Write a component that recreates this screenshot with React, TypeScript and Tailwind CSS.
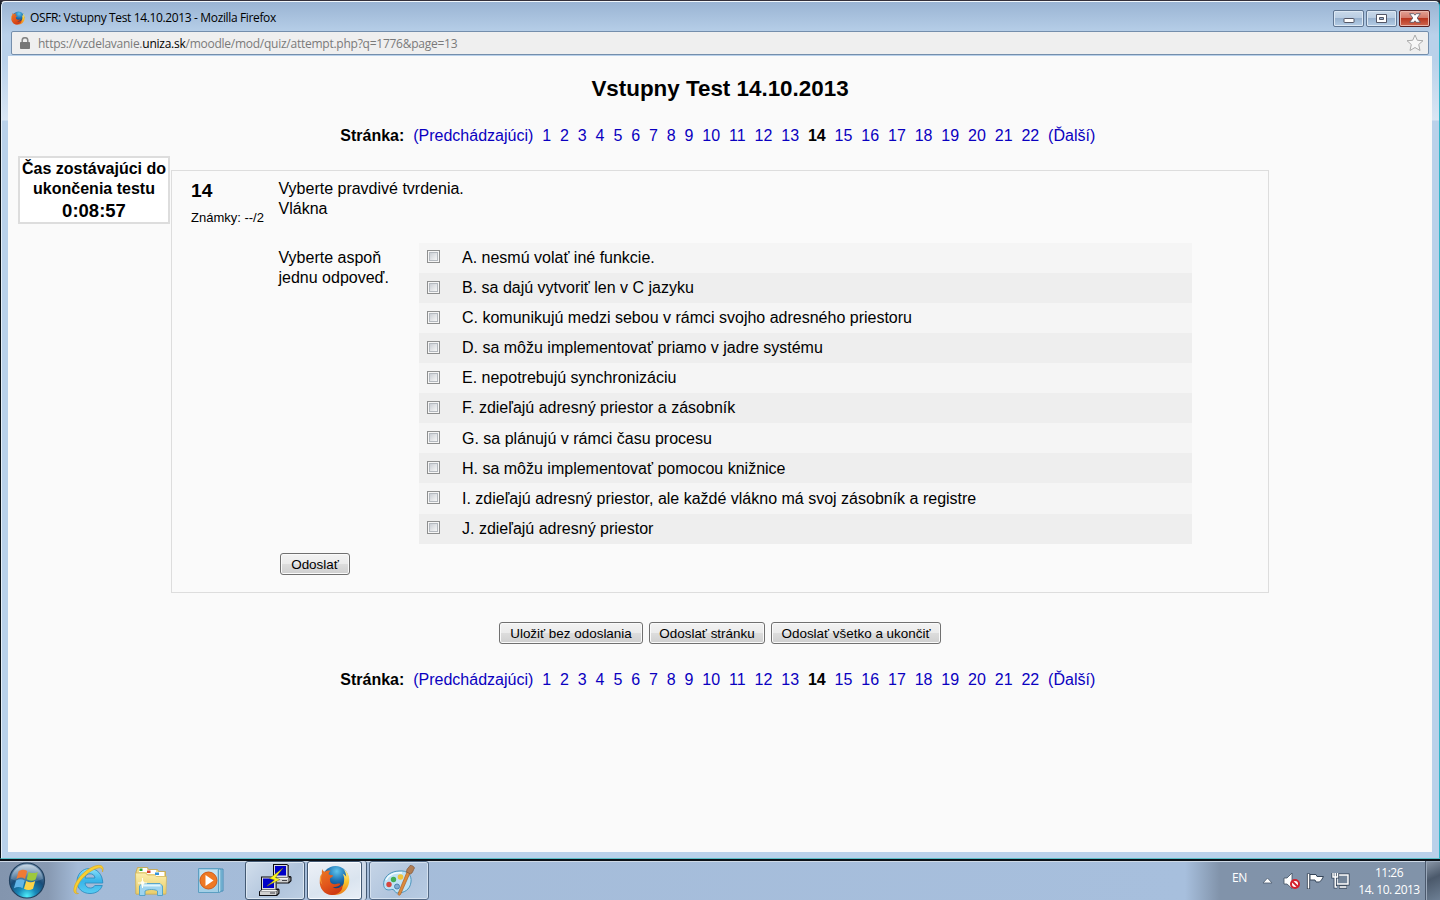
import React from "react";

const answers = [
  { text: "A. nesmú volať iné funkcie.", row: "h-[30px]", box: "pt-[7px]", label: "pt-[5px]" },
  { text: "B. sa dajú vytvoriť len v C jazyku", row: "h-[30px]", box: "pt-[8px]", label: "pt-[5px]" },
  { text: "C. komunikujú medzi sebou v rámci svojho adresného priestoru", row: "h-[30px]", box: "pt-[8px]", label: "pt-[5px]" },
  { text: "D. sa môžu implementovať priamo v jadre systému", row: "h-[30px]", box: "pt-[8px]", label: "pt-[5px]" },
  { text: "E. nepotrebujú synchronizáciu", row: "h-[30px]", box: "pt-[8px]", label: "pt-[5px]" },
  { text: "F. zdieľajú adresný priestor a zásobník", row: "h-[30px]", box: "pt-[8px]", label: "pt-[5px]" },
  { text: "G. sa plánujú v rámci času procesu", row: "h-[30px]", box: "pt-[8px]", label: "pt-[6px]" },
  { text: "H. sa môžu implementovať pomocou knižnice", row: "h-[30px]", box: "pt-[8px]", label: "pt-[6px]" },
  { text: "I. zdieľajú adresný priestor, ale každé vlákno má svoj zásobník a registre", row: "h-[31px]", box: "pt-[8px]", label: "pt-[6px]" },
  { text: "J. zdieľajú adresný priestor", row: "h-[30px]", box: "pt-[7px]", label: "pt-[5px]" },
];

const pages = Array.from({ length: 22 }, (_, i) => i + 1);

function FirefoxIcon({ size, id }: { size: number; id: string }) {
  return (
    <svg width={size} height={size} viewBox="0 0 32 32" className="shrink-0">
      <defs>
        <radialGradient id={id + "g"} cx="0.55" cy="0.2" r="0.8">
          <stop offset="0" stopColor="#5fc4ec" />
          <stop offset="0.45" stopColor="#1c72b4" />
          <stop offset="1" stopColor="#0c2458" />
        </radialGradient>
        <linearGradient id={id + "f"} x1="0" y1="0" x2="0.5" y2="1">
          <stop offset="0" stopColor="#ea7a25" />
          <stop offset="0.6" stopColor="#e2571b" />
          <stop offset="1" stopColor="#cf3a14" />
        </linearGradient>
        <linearGradient id={id + "y"} x1="0" y1="0" x2="0" y2="1">
          <stop offset="0" stopColor="#fff2a0" />
          <stop offset="0.5" stopColor="#fbc52c" />
          <stop offset="1" stopColor="#ec7a1c" />
        </linearGradient>
      </defs>
      <circle cx="17" cy="14.5" r="13.5" fill={"url(#" + id + "g)"} />
      <path d="M25 4c5 3 7 8 6 14-1.200 8-8 13-15 13-4 0-8-2-10-5 10 4 17 0 19.500-7 1-5 .5-7-1-10 2 1 3 2 3.500 3C28 9 27 6 25 4z" fill={"url(#" + id + "y)"} />
      <path d="M3.500 4C4 6 5 6.500 6 7c2-1.500 4-1.500 6-1-1 .8-2 2-2 3.500 1 1 3 1 4.500 1.200 0 1.500-1.500 2-3 3-.8 1 .3 2 0 3 1 3.500 5 3.500 8 2.500 1.500-.5 2.500 0 2.500 1-2 2-5 3-8 2.800 4 2.500 9 0 10-3 1.500 6-4 10-10 11C6 31.500 0 24 .8 16 1 12.500 2 10.500 3 9c-.2-2 0-3.500.5-5z" fill={"url(#" + id + "f)"} />
      <path d="M3 9c-1 3-1.500 8 1 12-3-3-4-7-2.500-10z" fill="#f7a13b" />
    </svg>
  );
}

function Pagination() {
  return (
    <div className="whitespace-pre text-center text-[16px] leading-5 text-[#0a00c0]">
      <b className="text-black">Stránka:</b>
      <span>{"  (Predchádzajúci)  "}</span>
      {pages.map((p) => (
        <span key={p} className={p === 14 ? "font-bold text-black" : ""}>
          {p + "  "}
        </span>
      ))}
      <span>(Ďalší)</span>
      <span>{" "}</span>
    </div>
  );
}

function FormButton({ label, className }: { label: string; className: string }) {
  return (
    <button
      className={
        "flex h-[22px] items-center justify-center whitespace-nowrap rounded-[3px] border border-[#707070] bg-[linear-gradient(#f3f3f3_0%,#ebebeb_48%,#dddddd_50%,#cfcfcf_100%)] pt-px text-[13.450px] leading-none text-black shadow-[inset_0_0_0_1px_#fafafa] " +
        className
      }
    >
      {label}
    </button>
  );
}

function Checkbox() {
  return (
    <span className="block h-[13px] w-[13px] border border-[#8e8f8f] bg-[#f6f6f6] p-px">
      <span className="block h-[9px] w-[9px] border border-[#b4b9bf] bg-[linear-gradient(135deg,#cbcfd5,#f6f6f6)]" />
    </span>
  );
}

function CaptionButtons() {
  return (
    <div className="flex gap-[2px]">
      <div className="flex h-[17px] w-[31px] items-center justify-center rounded-[2px] border border-[#5f7591] bg-[linear-gradient(#c9d9ea_0%,#b8cce2_48%,#98b2cf_50%,#b4cde6_100%)] shadow-[inset_0_0_0_1px_#dce8f4]">
        <svg width="12" height="12"><rect x="1" y="6.500" width="10" height="4" rx=".5" fill="#fff" stroke="#535666" /></svg>
      </div>
      <div className="flex h-[17px] w-[31px] items-center justify-center rounded-[2px] border border-[#5f7591] bg-[linear-gradient(#c9d9ea_0%,#b8cce2_48%,#98b2cf_50%,#b4cde6_100%)] shadow-[inset_0_0_0_1px_#dce8f4]">
        <svg width="11" height="9"><path d="M.5.5h10v8H.5z M3.500 3.500v2h4v-2z" fill="#fff" fillRule="evenodd" stroke="#535666" /></svg>
      </div>
      <div className="flex h-[17px] w-[31px] items-center justify-center rounded-[2px] border border-[#5a1f21] bg-[linear-gradient(#e3a296_0%,#d3796a_46%,#b93620_50%,#cf6850_100%)] shadow-[inset_0_0_0_1px_#e9b5ab]">
        <svg width="12" height="10"><path d="M.7.700h4L6 2.200 7.300.700h4L8.200 5l3.100 4.300h-4L6 7.800 4.700 9.300h-4L3.800 5z" fill="#fff" stroke="#535666" strokeWidth=".8" /></svg>
      </div>
    </div>
  );
}

function StartOrb() {
  return (
    <svg width="38" height="38" viewBox="0 0 38 38">
      <defs>
        <radialGradient id="orb" cx=".5" cy=".95" r=".9">
          <stop offset="0" stopColor="#4ff0fb" />
          <stop offset=".3" stopColor="#1787b8" />
          <stop offset=".62" stopColor="#194c78" />
          <stop offset="1" stopColor="#6f8fae" />
        </radialGradient>
        <linearGradient id="gloss" x1="0" y1="0" x2="0" y2="1">
          <stop offset="0" stopColor="#dce8f2" stopOpacity=".8" />
          <stop offset="1" stopColor="#a9c1d6" stopOpacity=".2" />
        </linearGradient>
      </defs>
      <circle cx="19" cy="18.500" r="17.500" fill="url(#orb)" stroke="#21405f" strokeWidth="1.200" />
      <path d="M3 17C4 8 11 2.500 19 2.500S34 8 35 17c-8 4-24 4-32 0z" fill="url(#gloss)" />
      <g transform="translate(-1.300 -2) scale(1.080)">
        <path d="M11 10.500c3-2 5.500-1.800 8-.2l-2 7.200c-2.500-1.600-5-1.600-8 0z" fill="#ef7b35" />
        <path d="M20.300 11c3 1.500 5.500 1.500 8.500 0l-2 7c-3 1.600-5.500 1.500-8.300-.1z" fill="#9dc83e" />
        <path d="M8.700 19c3-1.700 5.500-1.500 8-.1l-2 7.200c-2.500-1.500-5-1.500-8 0z" fill="#62b5e8" />
        <path d="M18 19.500c3 1.500 5.500 1.500 8.400 0l-2 7.200c-3 1.700-5.500 1.400-8.400-.1z" fill="#fcd348" />
      </g>
    </svg>
  );
}

function ExplorerE() {
  return (
    <svg width="32" height="32" viewBox="0 0 32 32">
      <defs>
        <linearGradient id="ie" x1="0" y1="0" x2="0" y2="1">
          <stop offset="0" stopColor="#8be0fa" />
          <stop offset=".5" stopColor="#38b3e8" />
          <stop offset="1" stopColor="#58cdf3" />
        </linearGradient>
      </defs>
      <path fillRule="evenodd" d="M16.500 4.500C24 4.500 29.500 10 29.800 19H12c.3 3.500 2.500 5 5.500 5 2 0 3.500-1 4.300-2.500h7.500C27.500 26.500 23 29.500 17 29.500 9.500 29.500 4 24.500 4 17.500S9 4.500 16.500 4.500zM12 14h10c-.5-3-2.300-4.200-5-4.200S12.500 11 12 14z" fill="url(#ie)" stroke="#2688bd" strokeWidth=".8" />
      <path d="M29.500 8C31 4.500 30 1 25.500 1.300 16 2 3 14 1 24c-.8 4 1 6.500 4.500 5.500-2.500 0-3-2-2-5C6.500 15 17 6 25 4c3-.8 4.500.5 4.500 4z" fill="#f9cf32" stroke="#d7a51e" strokeWidth=".6" />
    </svg>
  );
}

function FolderIcon() {
  return (
    <svg width="34" height="32" viewBox="0 0 34 32">
      <defs>
        <linearGradient id="fold" x1="0" y1="0" x2="0" y2="1">
          <stop offset="0" stopColor="#fbeeac" />
          <stop offset="1" stopColor="#e9cd6a" />
        </linearGradient>
      </defs>
      <path d="M2 6l1.500-4.500h10l1 2h9l1 2h7V28H2z" fill="#f2dd8b" stroke="#c3a34d" strokeWidth=".8" />
      <path d="M5 2h8v4H5zM13 4h9v4h-9zM21 6h9v4h-9z" fill="#fff" />
      <path d="M5.500 2.500h3v2.500h-3z" fill="#2aa22e" />
      <path d="M13 4.500h3.500v2.500H13z" fill="#d8432a" />
      <path d="M21 6.500h4v2.500h-4z" fill="#3393db" />
      <path d="M1.500 7h10l2 2h7l2 1.500h10L32 28H2z" fill="url(#fold)" stroke="#d1b45b" strokeWidth=".7" />
      <path d="M5.500 29.500V20L8 17.500h18l2.500 2.500v9.500h-5V25c-2-2-10-2-12.500 0v4.500z" fill="#9ed4ef" stroke="#4ea0c8" strokeWidth=".9" />
      <path d="M7.500 19.500h19" stroke="#dff5fc" strokeWidth="2" />
      <path d="M8.500 12v10M4 17h9" stroke="#fffef1" strokeWidth="1" />
      <circle cx="8.500" cy="17" r="2" fill="#fffef1" />
    </svg>
  );
}

function MediaIcon() {
  return (
    <svg width="30" height="28" viewBox="0 0 30 28">
      <path d="M11 2h15v22l-14 1z" fill="#8fc4e1" stroke="#478eb7" />
      <path d="M8 2h15l1 .5v22l-2 1H8z" fill="#b5dced" stroke="#5199be" />
      <path d="M1.500 1.500h20v24h-20z" fill="#a3cfe6" stroke="#5c9fc2" />
      <path d="M3 3h17v8L3 18z" fill="#c6e3f1" />
      <circle cx="11.500" cy="13.500" r="8.500" fill="#ee7924" stroke="#d25b18" />
      <path d="M8.500 8v11l8-5.500z" fill="#fff" />
    </svg>
  );
}

function PuttyTerminal() {
  return (
    <>
      <path d="M1 9L3 0h15v12l2 1v4l-3 3H0v-5l2-2z" fill="none" />
      <path d="M2 0h14l2 1.500V12h1.500l1 1v4L18 19.500H0V15l2-1.500z" fill="#0c0c10" />
      <path d="M3 1h13v12H3z" fill="#dcdcdc" />
      <path d="M16 1l1.500 1v10.500l-1.500 1z" fill="#8c8c8c" />
      <path d="M4 2h11v9.500H4z" fill="#0000c8" />
      <path d="M1 15l2-1.500h15.500L17 15z" fill="#f4f4f4" />
      <path d="M1 15h16v3.500H1z" fill="#cfcfcf" />
      <path d="M17 15l2.500-1.800v3.300L17 18.500z" fill="#858585" />
      <path d="M11 16.500h5" stroke="#43434a" />
    </>
  );
}

function PuttyIcon() {
  return (
    <svg width="33" height="33" viewBox="0 0 33 33">
      <g transform="translate(12 0)"><PuttyTerminal /></g>
      <g transform="translate(0 12.500)"><PuttyTerminal /></g>
      <path d="M24 4L10.500 14.500l5 1.500L8 22l13-6.500-4.500-2z" fill="#fbf51f" stroke="#777510" strokeWidth=".5" />
    </svg>
  );
}

function PaintIcon() {
  return (
    <svg width="34" height="34" viewBox="0 0 34 34">
      <path d="M17 8c8-1 13 4 12 11-1 8-7 11-14 11-2 0-2-3-4-3.500-2-.5-3 1-6 .2C2 26 1 22 2 18 4 12 9 8.500 17 8z" fill="#bfe2f5" stroke="#4e95bb" />
      <path d="M4 17c3-6 10-8 16-7" stroke="#f3fcff" strokeWidth="1.500" fill="none" />
      <circle cx="7" cy="21.500" r="2.700" fill="#d6463e" />
      <circle cx="11.500" cy="16.500" r="2.700" fill="#43ae55" />
      <circle cx="18.500" cy="14" r="2.800" fill="#f0c53b" />
      <circle cx="15" cy="23.500" r="2.500" fill="#7fabd0" stroke="#4c82b1" />
      <path d="M25 9l3 1-9.500 21.500c-1.500 1.500-3 .5-2.200-1.500z" fill="#dd8b3b" stroke="#a9602a" strokeWidth=".7" />
      <path d="M24.500 9c0-4 2.500-4 3.500-6.500 2-.5 4 1 4.500 2.500C31 7 31 10 28.500 11z" fill="#b17d54" stroke="#80583b" strokeWidth=".7" />
    </svg>
  );
}

function TrayIcons() {
  return (
    <svg width="90" height="20" viewBox="0 0 90 20">
      <path d="M1 12l4.500-5 4.500 5z" fill="#fff" stroke="#4b5c70" strokeWidth=".8" />
      <path d="M22 7h3l5-5v15.500L25 13h-3z" fill="#fff" stroke="#3f4e60" strokeWidth=".8" />
      <circle cx="33" cy="13" r="4" fill="#fff" stroke="#d3202c" strokeWidth="2" />
      <path d="M30 10l6 6" stroke="#d3202c" strokeWidth="2" />
      <path d="M46.500 2.500v15.500" stroke="#303d4e" strokeWidth="3.200" />
      <path d="M48 3.500h6l1 2h6.500l-2 3.500-2 2h-3.500l-1-2h-5z" fill="#fff" stroke="#36465a" />
      <path d="M46.500 3v14.500" stroke="#fff" strokeWidth="1.500" />
      <path d="M75 4h11v9H75z" fill="#64758a" stroke="#303f50" strokeWidth="3" />
      <path d="M75 4h11v9H75z" fill="#75869a" stroke="#fff" strokeWidth="1.500" />
      <path d="M77 16h8" stroke="#303f50" strokeWidth="3.200" />
      <path d="M77.500 16h7" stroke="#fff" strokeWidth="1.600" />
      <path d="M71 2v4h4.500V2M73.200 6v10h2" fill="none" stroke="#34445a" strokeWidth="3.200" />
      <path d="M71 2v4h4.500V2M73.200 2v14h2" fill="none" stroke="#fff" strokeWidth="1.500" />
    </svg>
  );
}

function Taskbar() {
  return (
    <footer className="flex h-[41px] shrink-0 border-t-2 border-t-[#0b1118] bg-[linear-gradient(90deg,#8395ae_0,#8799b2_48px,#a4bbd8_78px,#a7bfdd_1185px,#8193aa_1220px,#8193a9_100%)] shadow-[inset_0_1px_0_#ced9e6]">
      <div className="flex w-[245px] shrink-0">
        <div className="ml-2 w-[38px] pt-[1px]"><StartOrb /></div>
        <div className="ml-[27px] w-8 pt-[3px]"><ExplorerE /></div>
        <div className="ml-[29px] w-[34px] pt-[5px]"><FolderIcon /></div>
        <div className="ml-[29px] w-[30px] pt-[6px]"><MediaIcon /></div>
      </div>
      <div className="mr-[2px] h-[39px] w-[60px] shrink-0 rounded-[3px] border border-[#435973] bg-[linear-gradient(135deg,#d2deec,#b0c4dc_60%,#bccee3)] pl-[13px] pt-[2px] shadow-[inset_0_0_0_1px_#dce7f2]"><PuttyIcon /></div>
      <div className="h-[39px] w-[55px] shrink-0 rounded-[3px] border border-[#435973] bg-[linear-gradient(160deg,#edf1f7,#dae4ef_60%,#e8eef6)] pl-[11px] pt-[3px] shadow-[inset_0_0_0_1px_#f8fbff]"><FirefoxIcon size={31} id="task" /></div>
      <div className="mr-[2px] h-[39px] w-[5px] shrink-0 rounded-r-[3px] border-r border-[#435973] bg-[#ccd8e7]" />
      <div className="h-[39px] w-[60px] shrink-0 rounded-[3px] border border-[#536985] bg-[linear-gradient(135deg,#c5d4e6,#b0c4dd_60%,#b8cce3)] pl-[12px] pt-[1px] shadow-[inset_0_0_0_1px_#d5e1ef]"><PaintIcon /></div>
      <div className="ml-auto flex shrink-0 font-['Open_Sans','Noto_Sans',sans-serif] text-[12px] text-white">
        <span className="mr-[14px] w-4 pt-[9px] text-[12px] leading-4 tracking-[-0.4px]">EN</span>
        <div className="w-[90px] pt-[10px]"><TrayIcons /></div>
        <div className="ml-[3px] w-[68px] whitespace-nowrap pt-[3px] text-center leading-[17px] tracking-[-0.500px]">
          <div>11:26</div>
          <div>14. 10. 2013</div>
        </div>
        <div className="ml-[2px] w-[15px] border-l border-[#4b596d] bg-[linear-gradient(155deg,#8c99aa,#4b596b_45%,#6d7f94)] shadow-[inset_1px_1px_0_#9aa8ba]" />
      </div>
    </footer>
  );
}

export default function App() {
  return (
    <div className="flex h-[900px] w-[1440px] flex-col overflow-hidden bg-[#20222b] font-['Liberation_Sans',Arial,sans-serif] text-[16px] text-black">
      <div className="h-px shrink-0 bg-[#34303a]" />
      <section className="flex h-[858px] shrink-0 flex-col rounded-t-[5px] border-x border-t border-b border-l-[#0b1118] border-r-[#32b6ca] border-t-[#f2f7fb] border-b-[#58bec6] bg-[linear-gradient(#9ab4d3_0,#b9d1ea_33px,#b9d1ea_58px,#d9e6f4_118px,#b9d1ea_119px)] px-[7px] shadow-[inset_1px_0_0_#e5eff8]">
        <header className="flex h-[29px] shrink-0 items-center pl-[3px] pr-[2px] pt-[3px]">
          <FirefoxIcon size={14} id="title" />
          <span className="ml-[5px] whitespace-nowrap font-['Open_Sans','Noto_Sans',sans-serif] text-[12px] leading-4 tracking-[-0.360px]">OSFR: Vstupny Test 14.10.2013 - Mozilla Firefox</span>
          <div className="ml-auto"><CaptionButtons /></div>
        </header>
        <div className="mx-[3px] flex h-6 shrink-0 items-center rounded-[2px] border border-[#748eac] bg-[#efefef] pl-[8px] pr-[4px]">
          <svg width="10" height="12" viewBox="0 0 10 12"><path d="M2.200 6V3.500a2.800 2.800 0 0 1 5.600 0V6" fill="none" stroke="#858585" strokeWidth="1.500" /><rect y="5" width="10" height="7" rx=".8" fill="#777" /></svg>
          <span className="ml-[8px] whitespace-nowrap pt-px font-['Open_Sans','Noto_Sans',sans-serif] text-[12px] leading-4 tracking-[-0.250px] text-[#7a7a7a]">https://vzdelavanie.<span className="text-black">uniza.sk</span>/moodle/mod/quiz/attempt.php?q=1776&amp;page=13</span>
          <svg className="ml-auto" width="18" height="18" viewBox="0 0 18 18"><path d="M9 1l2.300 5.300 5.700.4-4.300 3.800L14 16.500l-5-3-5 3 1.300-6L1 6.700l5.700-.4z" fill="#f7f7f7" stroke="#aaa" /></svg>
        </div>
        <main className="mt-px flex h-[796px] shrink-0 flex-col bg-[#fafafa]">
          <h1 className="mt-[19px] text-center text-[22.400px] font-bold leading-7">Vstupny Test 14.10.2013</h1>
          <div className="mt-[23px]"><Pagination /></div>
          <div className="mt-[10px] flex items-start">
            <aside className="ml-[10px] h-[68px] w-[152px] shrink-0 border-2 border-[#dddddd] bg-white pt-px text-center font-bold leading-5">
              <div className="whitespace-nowrap">Čas zostávajúci do</div>
              <div>ukončenia testu</div>
              <div className="text-[18.500px] leading-[23px]">0:08:57</div>
            </aside>
            <section className="ml-px mt-[14px] flex h-[423px] w-[1098px] shrink-0 border border-[#dddddd]">
              <div className="w-[106px] shrink-0 pl-[19px] pt-2">
                <div className="text-[19.200px] font-bold leading-6">14</div>
                <div className="mt-[7px] whitespace-nowrap text-[13px] leading-4">Známky: --/2</div>
              </div>
              <div className="flex flex-col">
                <div className="h-[72px] pl-[0.500px] pt-[8px] leading-5">Vyberte pravdivé tvrdenia.<br />Vlákna</div>
                <div className="flex">
                  <div className="w-[141px] shrink-0 pl-[0.500px] pt-[5px] leading-5">Vyberte aspoň<br />jednu odpoveď.</div>
                  <div className="flex w-[773px] flex-col">
                    {answers.map((a, i) => (
                      <label key={a.text} className={(i % 2 ? "bg-[#eeeeee] " : "bg-[#f5f5f5] ") + "flex items-start pl-2 " + a.row}>
                        <span className={a.box}><Checkbox /></span>
                        <span className={"ml-[22px] whitespace-nowrap leading-5 " + a.label}>{a.text}</span>
                      </label>
                    ))}
                  </div>
                </div>
                <div className="ml-[2px] mt-[9px]"><FormButton label="Odoslať" className="w-[70px]" /></div>
              </div>
            </section>
          </div>
          <div className="mt-[29px] flex justify-center gap-[6px]">
            <FormButton label="Uložiť bez odoslania" className="w-[144px]" />
            <FormButton label="Odoslať stránku" className="w-[116px]" />
            <FormButton label="Odoslať všetko a ukončiť" className="w-[170px]" />
          </div>
          <div className="mt-[26px]"><Pagination /></div>
        </main>
      </section>
      <Taskbar />
    </div>
  );
}
